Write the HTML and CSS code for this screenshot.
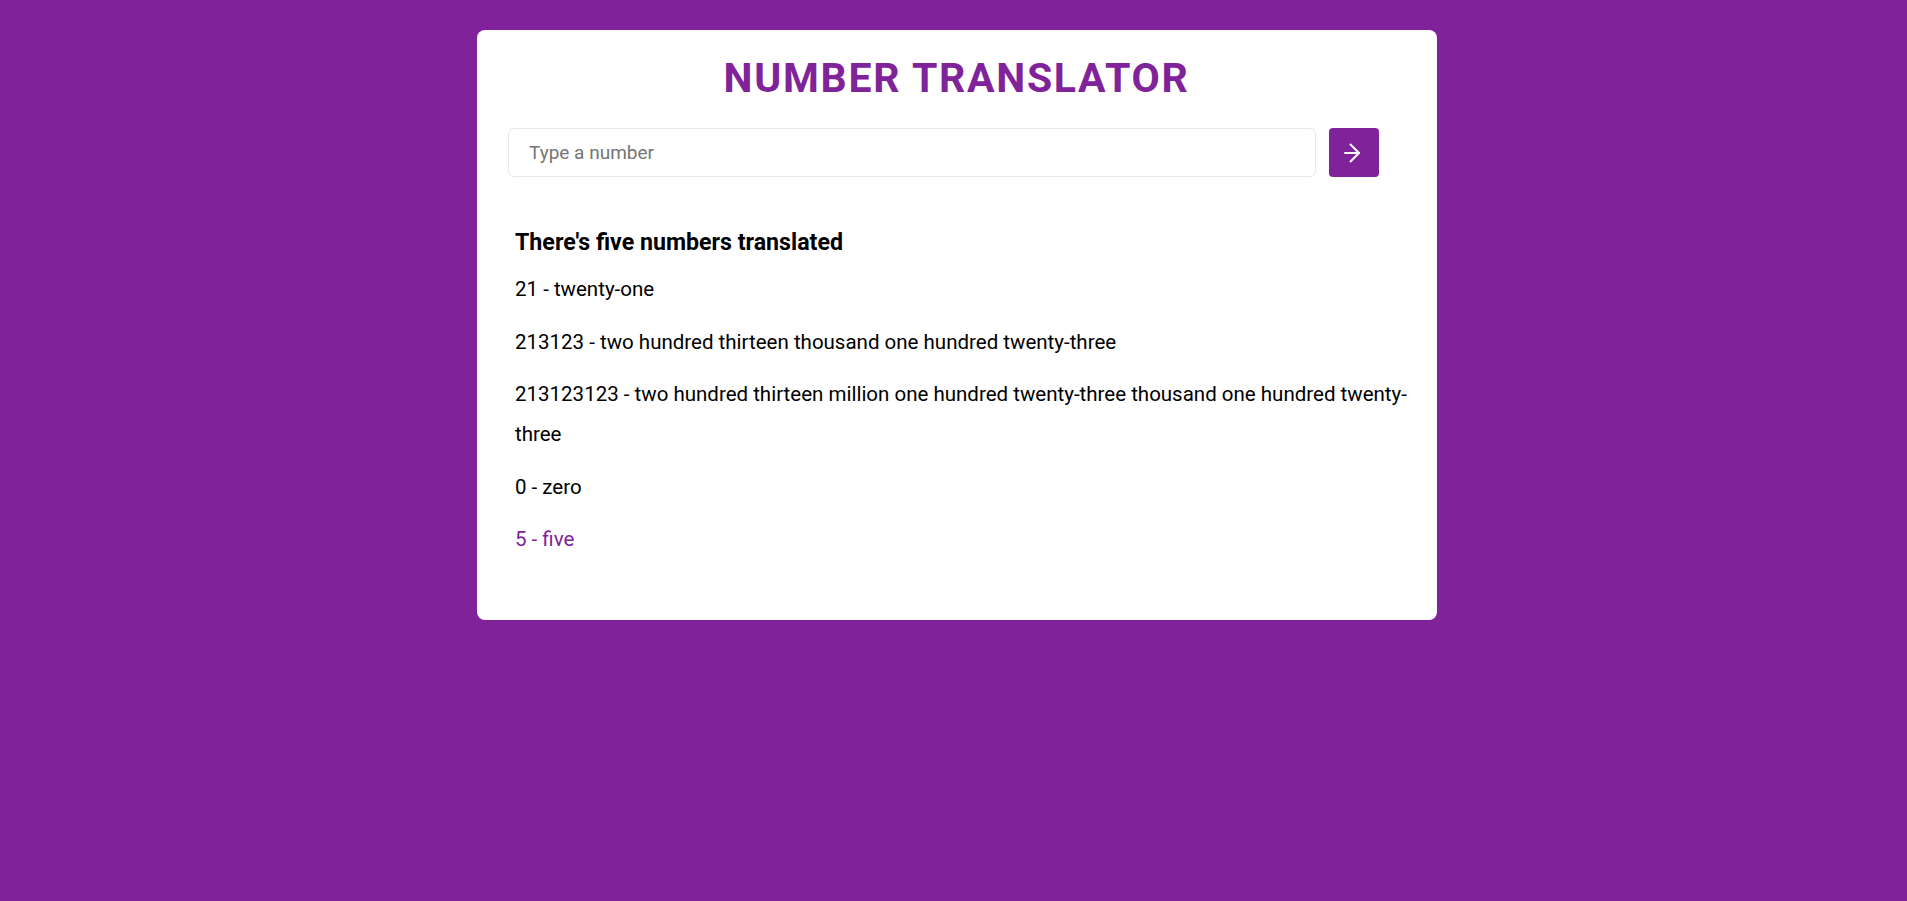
FILE: index.html
```html
<!DOCTYPE html>
<html lang="en">
<head>
<meta charset="utf-8">
<title>Number Translator</title>
<link rel="stylesheet" href="styles.css">
</head>
<body>
<main class="card">
  <h1 class="title">NUMBER TRANSLATOR</h1>
  <form class="form">
    <input class="input" type="text" placeholder="Type a number">
    <button class="btn" type="button" aria-label="Translate">
      <svg width="24" height="24" viewBox="0 0 24 24" fill="none" stroke="#fff" stroke-width="2" stroke-linecap="round" stroke-linejoin="round"><path d="M4 12H17.5"/><path d="M9.5 3.5L18 12L9.5 20.5"/></svg>
    </button>
  </form>
  <section class="results">
    <h2 class="results-title">There's five numbers translated</h2>
    <ul class="list">
      <li class="item">21 - twenty-one</li>
      <li class="item">213123 - two hundred thirteen thousand one hundred twenty-three</li>
      <li class="item">213123123 - two hundred thirteen million one hundred twenty-three thousand one hundred twenty-three</li>
      <li class="item">0 - zero</li>
      <li class="item item-last">5 - five</li>
    </ul>
  </section>
</main>
</body>
</html>
```
FILE: styles.css
```css
* { box-sizing: border-box; }
html, body { margin: 0; padding: 0; }
body {
  background: #80239a;
  font-family: Roboto, "Noto Sans", sans-serif;
  padding: 30px 0 0 7px;
  height: 100vh;
  overflow: hidden;
}
.card {
  width: 960px;
  margin: 0 auto;
  background: #fff;
  border-radius: 8px;
  padding: 22px 24px 61px 31px;
}
.title {
  margin: 0;
  text-align: center;
  font-size: 41px;
  line-height: 52px;
  font-weight: 700;
  letter-spacing: 1.7px;
  color: #80239a;
  padding-right: 8px;
}
.form {
  display: flex;
  gap: 13px;
  margin-top: 24px;
}
.input {
  width: 808px;
  height: 49px;
  border: 1px solid #e8e8e8;
  border-radius: 6px;
  padding: 0 20px;
  font-family: Roboto, sans-serif;
  font-size: 19px;
  color: #222;
  outline: none;
}
.input::placeholder { color: #757575; }
.btn {
  width: 50px;
  height: 49px;
  border: none;
  border-radius: 4px;
  background: #80239a;
  display: flex;
  align-items: center;
  justify-content: center;
  padding: 0 3px 0 0;
  cursor: pointer;
}
.results {
  padding-left: 7px;
  margin-top: 50px;
}
.results-title {
  margin: 0;
  font-size: 23.2px;
  line-height: 30px;
  font-weight: 700;
  color: #000;
}
.list {
  list-style: none;
  margin: 12px 0 0 0;
  padding: 0;
  display: flex;
  flex-direction: column;
  gap: 12.5px;
}
.item {
  font-size: 20.5px;
  line-height: 40px;
  color: #000;
}
.item-last { color: #80239a; }
```
